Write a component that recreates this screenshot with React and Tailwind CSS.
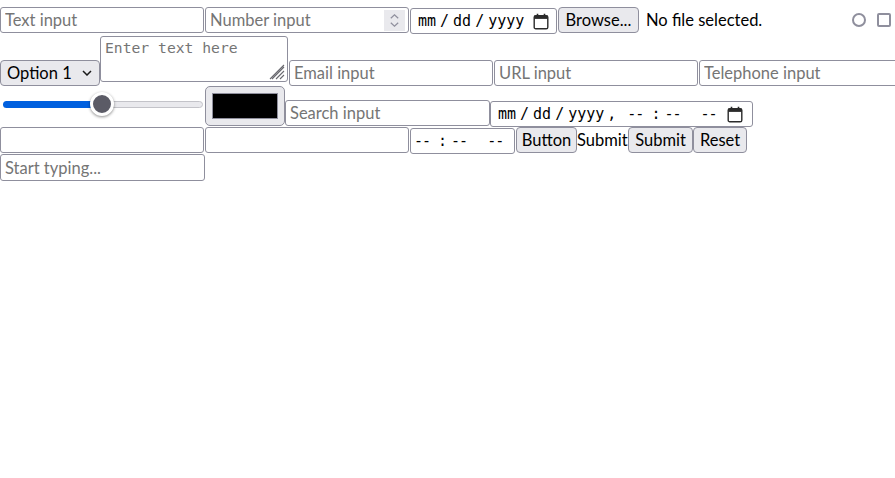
import React from "react";

function Calendar() {
  return (
    <svg width="16" height="17" viewBox="0 0 16 17" fill="none" className="shrink-0">
      <rect x="1.2" y="2.7" width="13.6" height="13.1" rx="1.6" stroke="#2b2b2b" strokeWidth="1.4" />
      <rect x="1.2" y="2.7" width="13.6" height="3.2" fill="#2b2b2b" />
      <path d="M4.5 0.8v2.5M11.5 0.8v2.5" stroke="#2b2b2b" strokeWidth="1.6" />
    </svg>
  );
}

function Spinner() {
  return (
    <div className="flex h-[21px] w-[21px] shrink-0 flex-col items-center justify-center gap-[3px] bg-[#e9e9ed]">
      <svg width="9" height="5" viewBox="0 0 9 5" fill="none">
        <path d="M0.8 4.3L4.5 0.8L8.2 4.3" stroke="#8f8f9d" strokeWidth="1.2" />
      </svg>
      <svg width="9" height="5" viewBox="0 0 9 5" fill="none">
        <path d="M0.8 0.7L4.5 4.2L8.2 0.7" stroke="#8f8f9d" strokeWidth="1.2" />
      </svg>
    </div>
  );
}

function Grip() {
  return (
    <svg width="16" height="16" viewBox="0 0 16 16" fill="none" className="pointer-events-none absolute bottom-[2px] right-[3px]">
      <path d="M15 3L3 15M15 7L7 15M15 11L11 15M15 1L1 15" stroke="#6a6a70" strokeWidth="1.1" />
    </svg>
  );
}

function DateText() {
  return (
    <div className="flex items-center font-['DejaVu_Sans_Mono',monospace] text-[15px] leading-none text-black">
      <span>mm</span>
      <span className="ml-[4px]">/</span>
      <span className="ml-[4px]">dd</span>
      <span className="ml-[4px]">/</span>
      <span className="ml-[4px]">yyyy</span>
    </div>
  );
}

function TimeText() {
  return (
    <div className="flex items-center font-['DejaVu_Sans_Mono',monospace] text-[15px] leading-none text-black">
      <span className="tracking-[-1px]">--</span>
      <span className="ml-[8px]">:</span>
      <span className="ml-[4px] tracking-[-1px]">--</span>
      <span className="ml-[20px] tracking-[-1px]">--</span>
    </div>
  );
}

const field =
  "h-[26px] shrink-0 border border-[#8f8f9d] rounded-[3px] bg-white px-[4px] text-[16.5px] text-black outline-none placeholder:text-[#757575]";

const btn =
  "h-[26px] shrink-0 rounded-[4px] border border-[#8f8f9d] bg-[#e9e9ed] text-[16.5px] text-black";

export default function App() {
  return (
    <div className="flex w-[895px] flex-col overflow-hidden bg-white font-['Lato',sans-serif] text-[16.5px] text-black">
      {/* Row 1 */}
      <div className="flex h-[34px] items-start">
        <input type="text" placeholder="Text input" className={`mt-[7px] w-[204px] ${field}`} />
        <div className="ml-[1px] mt-[7px] flex h-[26px] w-[204px] shrink-0 items-center rounded-[3px] border border-[#8f8f9d] bg-white pr-[3px]">
          <input type="text" placeholder="Number input" className="h-full min-w-0 flex-1 bg-transparent px-[4px] text-[16.5px] outline-none placeholder:text-[#757575]" />
          <Spinner />
        </div>
        <div className="ml-[1px] mt-[8px] flex h-[26px] w-[147px] shrink-0 items-center justify-between rounded-[3px] border border-[#8f8f9d] bg-white pl-[7px] pr-[7px]">
          <DateText />
          <Calendar />
        </div>
        <div className="ml-[1px] mt-[7px] flex w-[290px] shrink-0 items-center">
          <button className={`w-[81px] ${btn}`}>Browse...</button>
          <span className="ml-[7px]">No file selected.</span>
        </div>
        <div className="ml-[4px] mt-[13px] h-[14px] w-[14px] shrink-0 rounded-full border-2 border-[#8f8f9d] bg-white" />
        <div className="ml-[11px] mt-[13px] h-[14px] w-[14px] shrink-0 rounded-[2px] border-2 border-[#8f8f9d] bg-white" />
      </div>

      {/* Row 2 */}
      <div className="flex h-[52px] items-start">
        <div className="mt-[26px] flex h-[26px] w-[100px] shrink-0 items-center justify-between rounded-[4px] border border-[#8f8f9d] bg-[#e9e9ed] pl-[6px] pr-[7px]">
          <span>Option 1</span>
          <svg width="10" height="6" viewBox="0 0 10 6" fill="none">
            <path d="M1 1L5 5L9 1" stroke="#1a1a1a" strokeWidth="1.5" />
          </svg>
        </div>
        <div className="relative mt-[2px] h-[46px] w-[188px] shrink-0">
          <textarea
            placeholder="Enter text here"
            className="h-full w-full resize-none rounded-[3px] border border-[#8f8f9d] bg-white px-[4px] pt-[2px] font-['DejaVu_Sans_Mono',monospace] text-[14.7px] leading-[18px] outline-none placeholder:text-[#757575]"
          />
          <Grip />
        </div>
        <input type="email" placeholder="Email input" className={`ml-[1px] mt-[26px] w-[204px] ${field}`} />
        <input type="url" placeholder="URL input" className={`ml-[1px] mt-[26px] w-[204px] ${field}`} />
        <input type="tel" placeholder="Telephone input" className={`ml-[1px] mt-[26px] w-[204px] ${field}`} />
      </div>

      {/* Row 3 */}
      <div className="flex h-[41px] items-start">
        <div className="mt-[6px] flex h-[24px] w-[205px] shrink-0 items-center pl-[3px] pr-[2px]">
          <div className="h-[7px] w-[90px] rounded-l-full bg-[#0060df]" />
          <div className="relative z-10 -mx-[3px] h-[24px] w-[24px] shrink-0 rounded-full border-[3px] border-white bg-[#5b5b66] shadow-[0_1px_3px_rgba(0,0,0,0.45)]" />
          <div className="h-[7px] flex-1 rounded-r-full border border-[#c3c3c9] bg-[#e9e9ed]" />
        </div>
        <div className="flex h-[40px] w-[80px] shrink-0 items-center justify-center rounded-[5px] border border-[#8f8f9d] bg-[#e9e9ed]">
          <div className="h-[26px] w-[66px] border border-[#8f8f9d] bg-black" />
        </div>
        <input type="search" placeholder="Search input" className={`mt-[14px] w-[205px] ${field}`} />
        <div className="mt-[15px] flex h-[26px] w-[263px] shrink-0 items-center rounded-[3px] border border-[#8f8f9d] bg-white pl-[7px] pr-[9px]">
          <DateText />
          <span className="ml-[3px] font-['DejaVu_Sans_Mono',monospace] text-[15px] leading-none">,</span>
          <div className="ml-[11px]">
            <TimeText />
          </div>
          <div className="ml-auto">
            <Calendar />
          </div>
        </div>
      </div>

      {/* Row 4 */}
      <div className="flex h-[27px] items-start">
        <input type="password" className={`w-[204px] ${field}`} />
        <input type="text" className={`ml-[1px] w-[204px] ${field}`} />
        <div className="ml-[1px] mt-[1px] flex h-[26px] w-[105px] shrink-0 items-center rounded-[3px] border border-[#8f8f9d] bg-white pl-[3px]">
          <TimeText />
        </div>
        <button className={`ml-[1px] w-[61px] ${btn}`}>Button</button>
        <span className="flex h-[26px] w-[51px] shrink-0 items-center">Submit</span>
        <button className={`w-[65px] ${btn}`}>Submit</button>
        <button className={`w-[54px] ${btn}`}>Reset</button>
      </div>

      {/* Row 5 */}
      <div className="flex h-[27px] items-start">
        <input type="text" placeholder="Start typing..." className={`h-[27px] w-[205px] ${field}`} />
      </div>
    </div>
  );
}
